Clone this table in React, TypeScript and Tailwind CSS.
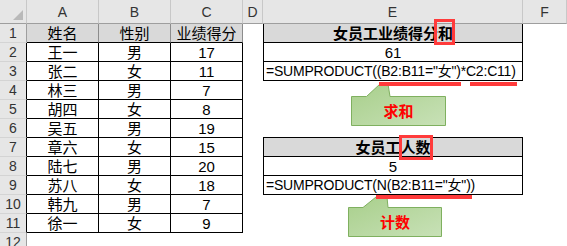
const data: [string, string, string][] = [
  ['姓名', '性别', '业绩得分'],
  ['王一', '男', '17'],
  ['张二', '女', '11'],
  ['林三', '男', '7'],
  ['胡四', '女', '8'],
  ['吴五', '男', '19'],
  ['章六', '女', '15'],
  ['陆七', '男', '20'],
  ['苏八', '女', '18'],
  ['韩九', '男', '7'],
  ['徐一', '女', '9'],
]

const letters = ['A', 'B', 'C', 'D', 'E', 'F']

function ECell({ row }: { row: number }) {
  const box = 'border-x border-b border-black'
  if (row === 1 || row === 7) {
    return (
      <div className={`flex items-center justify-center bg-[#d9d9d9] font-bold text-[15px] ${box}`}>
        {row === 1 ? '女员工业绩得分和' : '女员工人数'}
      </div>
    )
  }
  if (row === 2 || row === 8) {
    return (
      <div className={`flex items-center justify-center text-[15px] ${box}`}>
        {row === 2 ? '61' : '5'}
      </div>
    )
  }
  if (row === 3 || row === 9) {
    return (
      <div className={`flex items-center pl-[2px] text-[14px] tracking-[-0.2px] whitespace-nowrap ${box}`}>
        {row === 3 ? '=SUMPRODUCT((B2:B11="女")*C2:C11)' : '=SUMPRODUCT(N(B2:B11="女"))'}
      </div>
    )
  }
  if (row === 6) {
    return <div className="border-b border-black" />
  }
  return <div />
}

function SheetRow({ row }: { row: number }) {
  const cells = data[row - 1]
  const inTable = row >= 2 && row <= 11
  return (
    <>
      <div
        className={`flex items-center justify-center bg-[#e6e6e6] border-r border-b border-b-[#d4d4d4] text-[14px] text-[#333] ${
          inTable ? 'border-r-black' : 'border-r-[#9e9e9e]'
        }`}
      >
        {row}
      </div>
      {[0, 1, 2].map((i) =>
        row === 1 ? (
          <div
            key={i}
            className="flex items-center justify-center bg-[#d9d9d9] border-r border-b border-r-[#8c8c8c] border-b-black text-[15px]"
          >
            {cells[i]}
          </div>
        ) : inTable ? (
          <div key={i} className="flex items-center justify-center border-r border-b border-black text-[15px]">
            {cells[i]}
          </div>
        ) : (
          <div key={i} />
        )
      )}
      <div />
      <ECell row={row} />
      <div />
    </>
  )
}

export default function App() {
  return (
    <div className="relative w-[567px] h-[246px] overflow-hidden bg-white text-black font-['Liberation_Sans','Noto_Sans_CJK_SC',sans-serif] leading-none">
      <div className="grid grid-cols-[27px_72px_72px_72px_20px_260px_44px] grid-rows-[24px_repeat(12,19px)]">
        {/* Column headings */}
        <div className="bg-[#e6e6e6] border-r border-b border-r-[#c8c8c8] border-b-[#9e9e9e]">
          <svg width="26" height="23" viewBox="0 0 26 23">
            <polygon points="13,20 23,20 23,10" fill="#b9b9b9" />
          </svg>
        </div>
        {letters.map((l) => (
          <div
            key={l}
            className="flex items-center justify-center bg-[#e6e6e6] border-r border-b border-r-[#c8c8c8] border-b-[#9e9e9e] text-[14px] text-[#333]"
          >
            {l}
          </div>
        ))}

        {Array.from({ length: 12 }, (_, i) => (
          <SheetRow key={i} row={i + 1} />
        ))}
      </div>

      {/* Callout shapes */}
      <svg className="absolute left-0 top-0 pointer-events-none" width="567" height="246" viewBox="0 0 567 246">
        <defs>
          <linearGradient id="greenFill" x1="0" y1="0" x2="1" y2="1">
            <stop offset="0" stopColor="#a8cf8b" />
            <stop offset="1" stopColor="#c8e1b7" />
          </linearGradient>
        </defs>
        <path
          d="M351.5 96.5 H366.5 L380 84 L388 84 L390 96.5 H445.5 V125.5 H351.5 Z"
          fill="url(#greenFill)"
          stroke="#7fb05f"
        />
        <path
          d="M348.5 207.5 H363 L376 197 L387 197 L388 207.5 H441.5 V236.5 H348.5 Z"
          fill="url(#greenFill)"
          stroke="#7fb05f"
        />
      </svg>
      <div className="absolute left-[352px] top-[97px] w-[93px] h-[28px] flex items-center justify-center text-[15px] font-bold text-[#ff0000]">
        求和
      </div>
      <div className="absolute left-[349px] top-[208px] w-[92px] h-[28px] flex items-center justify-center text-[15px] font-bold text-[#ff0000]">
        计数
      </div>

      {/* Red markers */}
      <div className="absolute left-[379px] top-[82px] w-[82px] h-[4px] bg-[#ff3b3b]" />
      <div className="absolute left-[470px] top-[82px] w-[47px] h-[4px] bg-[#ff3b3b]" />
      <div className="absolute left-[376px] top-[195px] w-[96px] h-[4px] bg-[#ff3b3b]" />
      <div className="absolute left-[434px] top-[19px] w-[21px] h-[26px] border-[3px] border-[#ff3b3b]" />
      <div className="absolute left-[399px] top-[135px] w-[34px] h-[25px] border-[3px] border-[#ff3b3b]" />
    </div>
  )
}
